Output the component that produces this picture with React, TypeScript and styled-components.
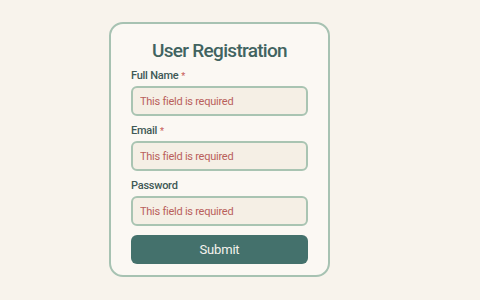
import React from "react";
import styled, { createGlobalStyle } from "styled-components";

const GlobalStyle = createGlobalStyle`
  html, body {
    margin: 0;
    padding: 0;
    background: #f8f3ec;
    font-family: Roboto, "Noto Sans", sans-serif;
  }
`;

const Page = styled.div`
  width: 480px;
  height: 300px;
  box-sizing: border-box;
  padding: 22px 0 0 109px;
`;

const Card = styled.form`
  width: 221px;
  box-sizing: border-box;
  background: #fbf8f3;
  border: 2px solid #a7c2b2;
  border-radius: 14px;
  padding: 15px 20px 11px;
  display: flex;
  flex-direction: column;
`;

const Title = styled.h1`
  margin: 0 0 6px;
  text-align: center;
  font-size: 19px;
  line-height: 24px;
  font-weight: 500;
  letter-spacing: -0.7px;
  color: #416360;
`;

const Field = styled.div`
  display: flex;
  flex-direction: column;
  margin-bottom: 8px;
`;

const Label = styled.label`
  font-size: 11px;
  line-height: 14px;
  font-weight: 500;
  letter-spacing: -0.25px;
  color: #405956;
  margin-bottom: 3px;
`;

const Star = styled.span`
  color: #c9625d;
  margin-left: 3px;
  font-size: 9px;
  line-height: 0;
`;

const Input = styled.input`
  box-sizing: border-box;
  width: 100%;
  height: 30px;
  border: 2px solid #a9c4b2;
  border-radius: 6px;
  background: #f5efe5;
  padding: 0 7px;
  font-family: Roboto, "Noto Sans", sans-serif;
  font-size: 11px;
  letter-spacing: -0.25px;
  outline: none;
  &::placeholder {
    color: #b9605b;
  }
`;

const Submit = styled.button`
  margin-top: 1px;
  height: 29px;
  border: none;
  border-radius: 6px;
  background: #44716c;
  color: #f6f3ee;
  font-family: Roboto, "Noto Sans", sans-serif;
  font-size: 13px;
  font-weight: 400;
  letter-spacing: -0.2px;
`;

const fields = [
  { label: "Full Name", required: true },
  { label: "Email", required: true },
  { label: "Password", required: false },
];

export default function App() {
  return (
    <>
      <GlobalStyle />
      <Page>
        <Card onSubmit={(e) => e.preventDefault()}>
          <Title>User Registration</Title>
          {fields.map((f) => (
            <Field key={f.label}>
              <Label>
                {f.label}
                {f.required && <Star>*</Star>}
              </Label>
              <Input type="text" placeholder="This field is required" />
            </Field>
          ))}
          <Submit type="submit">Submit</Submit>
        </Card>
      </Page>
    </>
  );
}
